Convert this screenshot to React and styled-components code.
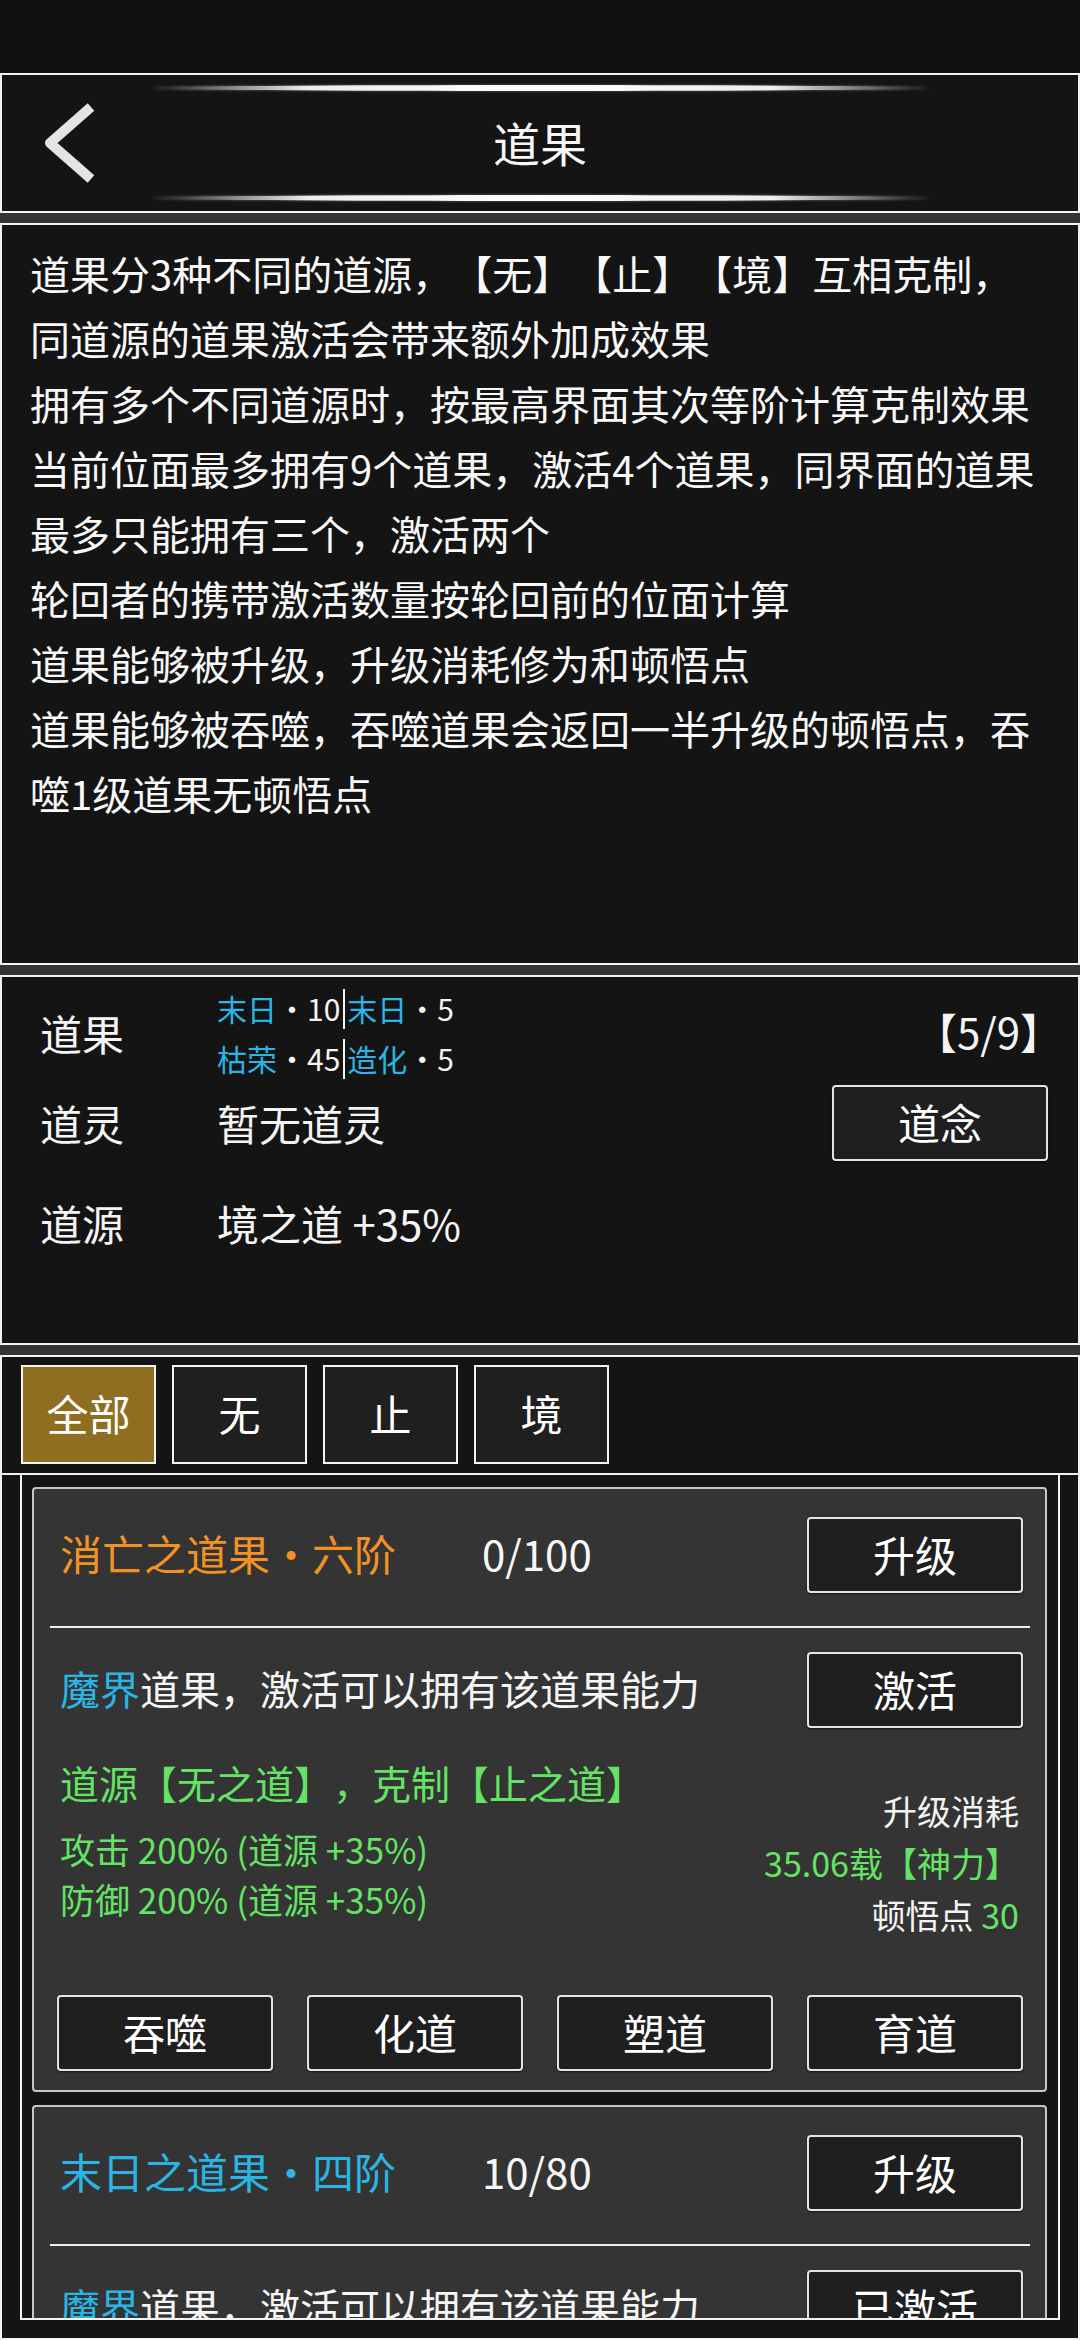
import React from 'react';
import styled, { createGlobalStyle } from 'styled-components';

const FONT = `"Noto Sans CJK SC", "Noto Sans", sans-serif`;
const BLUE = '#2bb5e4';
const GREEN = '#64e364';
const ORANGE = '#f39224';

const Global = createGlobalStyle`
  html, body { margin: 0; padding: 0; background: #111111; }
  body { font-family: ${FONT}; color: #ffffff; text-spacing-trim: space-all; }
  * { box-sizing: border-box; }
`;

const Page = styled.div`
  width: 1080px;
  height: 2340px;
  display: flex;
  flex-direction: column;
  background: #111111;
  overflow: hidden;
`;

const StatusArea = styled.div`
  flex: none;
  height: 73px;
  background: #111111;
`;

const Panel = styled.section`
  flex: none;
  height: ${(p) => p.$h}px;
  border: 2px solid #f2f2f2;
  background: #141414;
`;

const Band = styled.div`
  flex: none;
  height: 10px;
  background: #343434;
`;

/* ---------- header ---------- */
const Header = styled(Panel)`
  display: grid;
  grid-template-rows: auto 1fr auto;
  padding: 10px 0;
`;

const Glow = styled.div`
  justify-self: center;
  width: 777px;
  height: 6px;
  border-radius: 50%;
  background: linear-gradient(
    90deg,
    rgba(255, 255, 255, 0) 0%,
    rgba(255, 255, 255, 0.35) 7%,
    rgba(255, 255, 255, 0.92) 20%,
    #ffffff 50%,
    rgba(255, 255, 255, 0.92) 80%,
    rgba(255, 255, 255, 0.35) 93%,
    rgba(255, 255, 255, 0) 100%
  );
  box-shadow: 0 0 3px rgba(255, 255, 255, 0.35);
`;

const TitleRow = styled.div`
  display: grid;
  grid-template-columns: 1fr auto 1fr;
  align-items: center;
`;

const BackButton = styled.div`
  justify-self: start;
  padding-left: 40px;
  display: flex;
  align-items: center;
`;

const Title = styled.h1`
  margin: 0 0 4px;
  font-size: 47px;
  font-weight: 400;
  line-height: 1;
  color: #f6f6f6;
`;

/* ---------- rules panel ---------- */
const Rules = styled(Panel)`
  padding: 16px 28px;
  font-size: 40px;
  line-height: 65px;
  color: #f8f8f8;
  white-space: nowrap;
`;

/* ---------- info panel ---------- */
const Info = styled(Panel)`
  padding-top: 6px;
`;

const InfoRow = styled.div`
  height: ${(p) => p.$h || 80}px;
  margin-top: ${(p) => p.$mt || 0}px;
  display: grid;
  grid-template-columns: 177px 1fr auto;
  align-items: center;
  padding: 0 30px 0 38px;
`;

const Label = styled.span`
  font-size: 42px;
  line-height: 1;
  color: #f4f4f4;
`;

const Value = styled.span`
  font-size: 42px;
  line-height: 1;
  color: #f4f4f4;
`;

const FruitList = styled.div`
  font-size: 30px;
  line-height: 50px;
  color: #f4f4f4;
  white-space: nowrap;
`;

const Hue = styled.span`
  color: ${(p) => p.$c};
`;

const Bar = styled.span`
  display: inline-block;
  width: 2px;
  height: 40px;
  margin: 0 2px 0 3px;
  vertical-align: -8px;
  background: #f4f4f4;
`;

const Count = styled.span`
  font-size: 42px;
  line-height: 1;
  color: #f4f4f4;
  margin-right: -14px;
  margin-top: -4px;
`;

const Btn = styled.button`
  flex: none;
  width: 216px;
  height: 76px;
  padding: 0 0 3px;
  border: 2px solid #e4e4e4;
  border-radius: 4px;
  background: #1f1f1f;
  color: #ffffff;
  font-family: ${FONT};
  font-size: 42px;
  line-height: 1;
  display: flex;
  align-items: center;
  justify-content: center;
  box-shadow: 0 1px 2px rgba(0, 0, 0, 0.6);
`;

/* ---------- tabs ---------- */
const Tabs = styled(Panel)`
  display: flex;
  gap: 16px;
  padding: 8px 19px;
`;

const Tab = styled.div`
  width: 135px;
  height: 99px;
  padding-bottom: 4px;
  border: 2px solid #f4f4f4;
  background: ${(p) => (p.$active ? '#8f6e22' : '#1f1f1f')};
  color: #ffffff;
  font-size: 42px;
  display: flex;
  align-items: center;
  justify-content: center;
`;

/* ---------- list ---------- */
const ListArea = styled.div`
  flex: 1;
  min-height: 0;
  border: 2px solid #f2f2f2;
  border-top: none;
  background: #141414;
  padding: 0 18px 18px;
`;

const ListBox = styled.div`
  height: 100%;
  border: 2px solid #f2f2f2;
  border-top: none;
  background: #141414;
  overflow: hidden;
  padding: 12px 11px 0 10px;
  display: flex;
  flex-direction: column;
  gap: 13px;
`;

const Card = styled.div`
  flex: none;
  border: 2px solid #c6c6c6;
  border-radius: 4px;
  background: #343434;
  padding: 0 22px 19px 23px;
`;

const HeadRow = styled.div`
  margin-top: 28px;
  height: 76px;
  display: flex;
  align-items: center;
`;

const Name = styled.span`
  width: 425px;
  padding: 0 0 4px 3px;
  font-size: 42px;
  line-height: 1;
  color: ${(p) => p.$c};
  white-space: nowrap;
`;

const Progress = styled.span`
  padding-bottom: 4px;
  font-size: 42px;
  line-height: 1;
  color: #f6f6f6;
`;

const Push = styled.div`
  margin-left: auto;
`;

const Divider = styled.div`
  margin: 33px -7px 0;
  height: 2px;
  background: #eeeeee;
`;

const DescRow = styled.div`
  margin-top: 24px;
  height: 76px;
  display: flex;
  align-items: center;
`;

const Desc = styled.span`
  padding: 0 0 4px 3px;
  font-size: 40px;
  line-height: 1;
  color: #f6f6f6;
  white-space: nowrap;
`;

const Details = styled.div`
  margin-top: 26px;
  display: grid;
  grid-template-columns: 1fr auto;
`;

const SourceLine = styled.div`
  padding-left: 3px;
  font-size: 39px;
  line-height: 56px;
  color: ${GREEN};
  white-space: nowrap;
`;

const Stats = styled.div`
  margin-top: 14px;
  padding-left: 3px;
  font-size: 35px;
  line-height: 50px;
  color: ${GREEN};
  white-space: nowrap;
`;

const Cost = styled.div`
  padding-top: 31px;
  padding-right: 4px;
  font-size: 34px;
  line-height: 52px;
  text-align: right;
  color: #f4f4f4;
  white-space: nowrap;
`;

const ActionRow = styled.div`
  margin-top: 54px;
  display: flex;
  justify-content: space-between;
`;

const Chevron = () => (
  <svg width="56" height="80" viewBox="0 0 56 80">
    <polyline
      points="49,4 8,40 49,76"
      fill="none"
      stroke="#e4e4e4"
      strokeWidth="10"
      strokeLinejoin="round"
      strokeLinecap="butt"
    />
  </svg>
);

const fruits = [
  {
    name: '消亡之道果·六阶',
    color: ORANGE,
    progress: '0/100',
    active: '激活',
    source: '道源【无之道】，克制【止之道】',
    stats: ['攻击 200% (道源 +35%)', '防御 200% (道源 +35%)'],
    cost: '35.06载【神力】',
    insight: '30',
  },
  {
    name: '末日之道果·四阶',
    color: BLUE,
    progress: '10/80',
    active: '已激活',
    source: '道源【境之道】，克制【无之道】',
    stats: ['生命 160% (道源 +35%)', '暴击 160% (道源 +35%)'],
    cost: '12.40载【神力】',
    insight: '20',
  },
];

const FruitCard = ({ f }) => (
  <Card>
    <HeadRow>
      <Name $c={f.color}>{f.name}</Name>
      <Progress>{f.progress}</Progress>
      <Push>
        <Btn>升级</Btn>
      </Push>
    </HeadRow>
    <Divider />
    <DescRow>
      <Desc>
        <Hue $c={BLUE}>魔界</Hue>道果，激活可以拥有该道果能力
      </Desc>
      <Push>
        <Btn>{f.active}</Btn>
      </Push>
    </DescRow>
    <Details>
      <div>
        <SourceLine>{f.source}</SourceLine>
        <Stats>
          {f.stats.map((s) => (
            <div key={s}>{s}</div>
          ))}
        </Stats>
      </div>
      <Cost>
        <div>升级消耗</div>
        <div>
          <Hue $c={GREEN}>{f.cost}</Hue>
        </div>
        <div>
          顿悟点 <Hue $c={GREEN}>{f.insight}</Hue>
        </div>
      </Cost>
    </Details>
    <ActionRow>
      <Btn>吞噬</Btn>
      <Btn>化道</Btn>
      <Btn>塑道</Btn>
      <Btn>育道</Btn>
    </ActionRow>
  </Card>
);

export default function App() {
  return (
    <>
      <Global />
      <Page>
        <StatusArea />
        <Header $h={140}>
          <Glow />
          <TitleRow>
            <BackButton>
              <Chevron />
            </BackButton>
            <Title>道果</Title>
            <div />
          </TitleRow>
          <Glow />
        </Header>
        <Band />
        <Rules $h={742}>
          道果分3种不同的道源，【无】【止】【境】互相克制，
          <br />
          同道源的道果激活会带来额外加成效果
          <br />
          拥有多个不同道源时，按最高界面其次等阶计算克制效果
          <br />
          当前位面最多拥有9个道果，激活4个道果，同界面的道果
          <br />
          最多只能拥有三个，激活两个
          <br />
          轮回者的携带激活数量按轮回前的位面计算
          <br />
          道果能够被升级，升级消耗修为和顿悟点
          <br />
          道果能够被吞噬，吞噬道果会返回一半升级的顿悟点，吞
          <br />
          噬1级道果无顿悟点
        </Rules>
        <Band />
        <Info $h={370}>
          <InfoRow $h={100}>
            <Label>道果</Label>
            <FruitList>
              <div>
                <Hue $c={BLUE}>末日</Hue>·10<Bar />
                <Hue $c={BLUE}>末日</Hue>·5
              </div>
              <div>
                <Hue $c={BLUE}>枯荣</Hue>·45<Bar />
                <Hue $c={BLUE}>造化</Hue>·5
              </div>
            </FruitList>
            <Count>【5/9】</Count>
          </InfoRow>
          <InfoRow>
            <Label>道灵</Label>
            <Value>暂无道灵</Value>
            <Btn>道念</Btn>
          </InfoRow>
          <InfoRow $mt={20}>
            <Label>道源</Label>
            <Value>境之道 +35%</Value>
            <span />
          </InfoRow>
        </Info>
        <Band />
        <Tabs $h={120}>
          <Tab $active>全部</Tab>
          <Tab>无</Tab>
          <Tab>止</Tab>
          <Tab>境</Tab>
        </Tabs>
        <ListArea>
          <ListBox>
            {fruits.map((f) => (
              <FruitCard key={f.name} f={f} />
            ))}
          </ListBox>
        </ListArea>
      </Page>
    </>
  );
}
